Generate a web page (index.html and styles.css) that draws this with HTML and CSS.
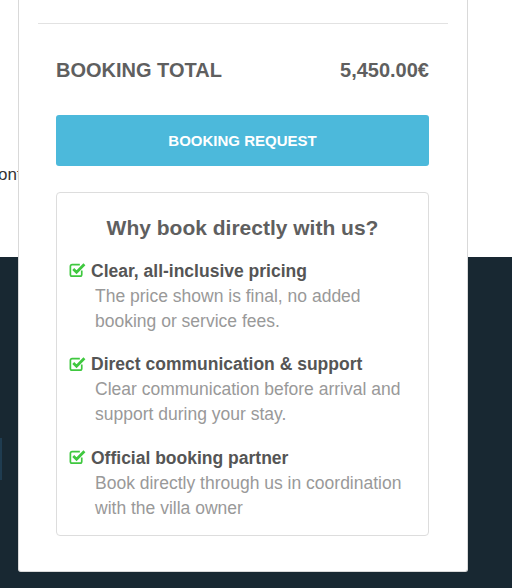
FILE: index.html
```html
<!DOCTYPE html>
<html lang="en">
<head>
<meta charset="utf-8">
<title>Booking</title>
<link rel="stylesheet" href="styles.css">
</head>
<body>
<div class="page">
  <section class="top-area">
    <p class="behind-text">ont</p>
  </section>
  <section class="dark-area">
    <div class="edge-button"></div>
  </section>

  <aside class="card">
    <hr class="divider">
    <div class="card-body">
      <div class="total-row">
        <span class="total-label">BOOKING TOTAL</span>
        <span class="total-value">5,450.00€</span>
      </div>
      <button class="request-btn" type="button">BOOKING REQUEST</button>

      <div class="why-box">
        <h3 class="why-title">Why book directly with us?</h3>
        <ul class="why-list">
          <li class="why-item">
            <div class="why-head">
              <svg class="check" viewBox="0 0 16 16" width="17" height="17" aria-hidden="true">
                <path d="M12 9v3.6a1.6 1.6 0 0 1-1.6 1.6H2.9a1.6 1.6 0 0 1-1.6-1.6V5.1a1.6 1.6 0 0 1 1.6-1.6h7.3" fill="none" stroke="#3fc83f" stroke-width="1.6"/>
                <path d="M4 7.5l3.1 3.1 7.4-7.6" fill="none" stroke="#3fc83f" stroke-width="2.6"/>
              </svg>
              <span>Clear, all-inclusive pricing</span>
            </div>
            <p class="why-desc">The price shown is final, no added booking or service fees.</p>
          </li>
          <li class="why-item">
            <div class="why-head">
              <svg class="check" viewBox="0 0 16 16" width="17" height="17" aria-hidden="true">
                <path d="M12 9v3.6a1.6 1.6 0 0 1-1.6 1.6H2.9a1.6 1.6 0 0 1-1.6-1.6V5.1a1.6 1.6 0 0 1 1.6-1.6h7.3" fill="none" stroke="#3fc83f" stroke-width="1.6"/>
                <path d="M4 7.5l3.1 3.1 7.4-7.6" fill="none" stroke="#3fc83f" stroke-width="2.6"/>
              </svg>
              <span>Direct communication &amp; support</span>
            </div>
            <p class="why-desc">Clear communication before arrival and support during your stay.</p>
          </li>
          <li class="why-item">
            <div class="why-head">
              <svg class="check" viewBox="0 0 16 16" width="17" height="17" aria-hidden="true">
                <path d="M12 9v3.6a1.6 1.6 0 0 1-1.6 1.6H2.9a1.6 1.6 0 0 1-1.6-1.6V5.1a1.6 1.6 0 0 1 1.6-1.6h7.3" fill="none" stroke="#3fc83f" stroke-width="1.6"/>
                <path d="M4 7.5l3.1 3.1 7.4-7.6" fill="none" stroke="#3fc83f" stroke-width="2.6"/>
              </svg>
              <span>Official booking partner</span>
            </div>
            <p class="why-desc">Book directly through us in coordination with the villa owner</p>
          </li>
        </ul>
      </div>
    </div>
  </aside>
</div>
</body>
</html>
```

FILE: styles.css
```css
* { box-sizing: border-box; }

html, body {
  margin: 0;
  padding: 0;
  height: 100%;
  overflow: hidden;
}

body {
  font-family: "Liberation Sans", Arial, sans-serif;
  background: #182832;
}

.page {
  position: relative;
  width: 512px;
  height: 588px;
  display: flex;
  flex-direction: column;
}

.top-area {
  height: 257px;
  background: #ffffff;
  padding-top: 163px;
}

.behind-text {
  margin: 0 0 0 -2px;
  font-size: 17px;
  line-height: 24px;
  color: #333333;
}

.dark-area {
  flex: 1;
  background: #182832;
  padding-top: 181px;
}

.edge-button {
  width: 2px;
  height: 42px;
  background: #1f3c50;
}

.card {
  position: absolute;
  left: 18px;
  top: -20px;
  width: 450px;
  height: 592px;
  background: #ffffff;
  border: 1px solid #d9d9d9;
  border-top: none;
  border-radius: 0 0 3px 3px;
  padding: 43px 19px 0 19px;
}

.divider {
  margin: 0;
  border: 0;
  border-top: 1px solid #e2e2e2;
}

.card-body {
  padding: 0 19px 0 18px;
}

.total-row {
  display: flex;
  justify-content: space-between;
  align-items: center;
  margin-top: 34px;
  font-size: 20px;
  line-height: 24px;
  font-weight: bold;
  color: #5f5f5f;
}

.request-btn {
  display: block;
  width: 100%;
  height: 51px;
  margin-top: 33px;
  border: none;
  border-radius: 3px;
  background: #4cb9db;
  color: #ffffff;
  font-family: "Liberation Sans", Arial, sans-serif;
  font-size: 15px;
  font-weight: bold;
  letter-spacing: 0;
  padding: 0;
}

.why-box {
  margin-top: 26px;
  border: 1px solid #dddddd;
  border-radius: 4px;
  padding: 22px 12px 14px 12px;
}

.why-title {
  margin: 0;
  text-align: center;
  font-size: 21px;
  line-height: 26px;
  font-weight: bold;
  color: #5f5f5f;
}

.why-list {
  list-style: none;
  margin: 17.5px 0 0 0;
  padding: 0;
}

.why-item {
  margin-bottom: 18.5px;
}

.why-item:last-child {
  margin-bottom: 0;
}

.why-head {
  display: flex;
  align-items: center;
  gap: 5px;
  font-size: 17.5px;
  line-height: 25px;
  font-weight: bold;
  color: #555555;
}

.check {
  flex: none;
  margin-top: -3px;
}

.why-desc {
  margin: 0;
  padding-left: 26px;
  font-size: 17.5px;
  line-height: 25px;
  color: #999999;
}
```
